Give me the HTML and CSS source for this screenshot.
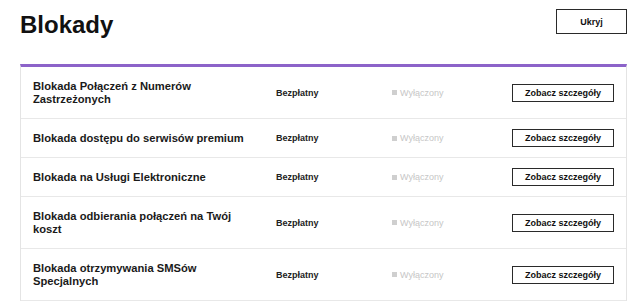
FILE: index.html
```html
<!DOCTYPE html>
<html lang="pl">
<head>
  <meta charset="UTF-8">
  <meta name="viewport" content="width=device-width, initial-scale=1.0">
  <title>Blokady</title>
  <link rel="stylesheet" href="styles.css">
</head>
<body>
  <div class="page">
    <div class="header">
      <h1 class="title">Blokady</h1>
      <a href="#" class="btn hide-btn">Ukryj</a>
    </div>

    <div class="block-list">
      <div class="block-row">
        <div class="block-name">Blokada Połączeń z Numerów Zastrzeżonych</div>
        <div class="block-price">Bezpłatny</div>
        <div class="block-status"><span class="status-dot"></span>Wyłączony</div>
        <a href="#" class="btn details-btn">Zobacz szczegóły</a>
      </div>
      <div class="block-row">
        <div class="block-name">Blokada dostępu do serwisów premium</div>
        <div class="block-price">Bezpłatny</div>
        <div class="block-status"><span class="status-dot"></span>Wyłączony</div>
        <a href="#" class="btn details-btn">Zobacz szczegóły</a>
      </div>
      <div class="block-row">
        <div class="block-name">Blokada na Usługi Elektroniczne</div>
        <div class="block-price">Bezpłatny</div>
        <div class="block-status"><span class="status-dot"></span>Wyłączony</div>
        <a href="#" class="btn details-btn">Zobacz szczegóły</a>
      </div>
      <div class="block-row">
        <div class="block-name">Blokada odbierania połączeń na Twój koszt</div>
        <div class="block-price">Bezpłatny</div>
        <div class="block-status"><span class="status-dot"></span>Wyłączony</div>
        <a href="#" class="btn details-btn">Zobacz szczegóły</a>
      </div>
      <div class="block-row">
        <div class="block-name">Blokada otrzymywania SMSów Specjalnych</div>
        <div class="block-price">Bezpłatny</div>
        <div class="block-status"><span class="status-dot"></span>Wyłączony</div>
        <a href="#" class="btn details-btn">Zobacz szczegóły</a>
      </div>
    </div>
  </div>
</body>
</html>
```

FILE: styles.css
```css
* {
  margin: 0;
  padding: 0;
  box-sizing: border-box;
}

body {
  font-family: "Liberation Sans", Arial, sans-serif;
  color: #1a1a1a;
  background-color: #fff;
  overflow: hidden;
}

.page {
  padding: 9px 13px 0 20px;
}

.header {
  display: flex;
  justify-content: space-between;
  align-items: flex-start;
}

.title {
  margin-top: 2px;
  font-size: 24px;
  line-height: 28px;
  font-weight: bold;
  color: #111;
}

.btn {
  display: flex;
  justify-content: center;
  align-items: center;
  border: 1.5px solid #2a2a2a;
  background-color: #fff;
  color: #111;
  font-weight: bold;
  font-size: 9px;
  text-decoration: none;
}

.hide-btn {
  width: 71px;
  height: 25px;
}

/* lista blokad */
.block-list {
  margin-top: 25px;
  border-top: 3px solid #8c63c9;
  border-left: 1px solid #e4e4e4;
  border-right: 1px solid #e4e4e4;
}

.block-row {
  display: grid;
  grid-template-columns: 243px 116px 1fr auto;
  align-items: center;
  padding: 0 12px;
  border-bottom: 1px solid #e8e8e8;
}

.block-name {
  padding: 12.5px 22px 12.5px 0;
  font-size: 11.2px;
  line-height: 13px;
  font-weight: bold;
}

.block-price {
  font-size: 9px;
  font-weight: bold;
  color: #222;
}

.block-status {
  display: flex;
  align-items: center;
  gap: 3px;
  font-size: 9px;
  color: #c6c6c6;
}

.status-dot {
  width: 5px;
  height: 5px;
  background-color: #cfcfcf;
}

.details-btn {
  width: 102px;
  height: 18px;
}
```
